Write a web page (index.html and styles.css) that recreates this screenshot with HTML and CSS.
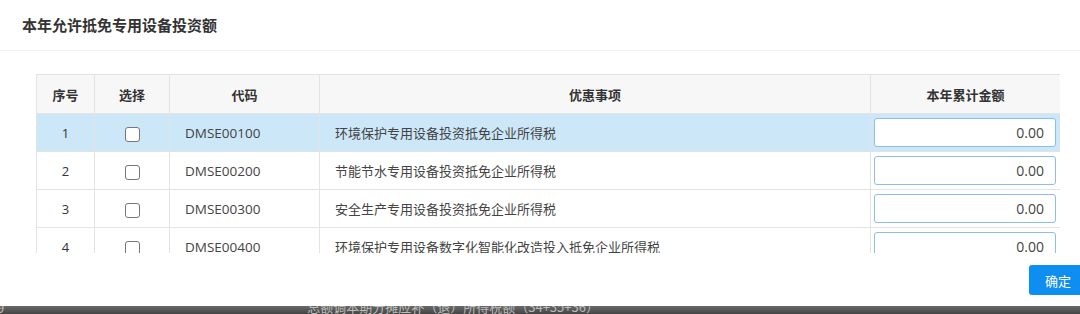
FILE: index.html
```html
<!DOCTYPE html>
<html lang="zh">
<head>
<meta charset="utf-8">
<link rel="stylesheet" href="styles.css">
</head>
<body>
<div class="page">
  <div class="modal">
    <div class="modal-header">
      <span class="title">本年允许抵免专用设备投资额</span>
      <span class="close">×</span>
    </div>
    <div class="modal-body">
      <div class="scroll">
        <table class="grid">
          <colgroup>
            <col class="c1"><col class="c2"><col class="c3"><col class="c4"><col class="c5">
          </colgroup>
          <thead>
            <tr><th>序号</th><th>选择</th><th>代码</th><th>优惠事项</th><th>本年累计金额</th></tr>
          </thead>
          <tbody>
            <tr class="active"><td class="num">1</td><td class="chk"><span class="box"></span></td><td class="code">DMSE00100</td><td class="item">环境保护专用设备投资抵免企业所得税</td><td class="amt"><div class="input">0.00</div></td></tr>
            <tr><td class="num">2</td><td class="chk"><span class="box"></span></td><td class="code">DMSE00200</td><td class="item">节能节水专用设备投资抵免企业所得税</td><td class="amt"><div class="input">0.00</div></td></tr>
            <tr><td class="num">3</td><td class="chk"><span class="box"></span></td><td class="code">DMSE00300</td><td class="item">安全生产专用设备投资抵免企业所得税</td><td class="amt"><div class="input">0.00</div></td></tr>
            <tr><td class="num">4</td><td class="chk"><span class="box"></span></td><td class="code">DMSE00400</td><td class="item">环境保护专用设备数字化智能化改造投入抵免企业所得税</td><td class="amt"><div class="input">0.00</div></td></tr>
          </tbody>
        </table>
      </div>
    </div>
    <div class="modal-footer">
      <button class="ok">确定</button>
    </div>
  </div>
  <div class="backdrop">
    <span class="bd-a">9</span>
    <span class="bd-c">总额调本期分摊应补（退）所得税额（34+35+36）</span>
  </div>
</div>
</body>
</html>
```
FILE: styles.css
```css
* { box-sizing: border-box; }
html, body { margin: 0; padding: 0; }
body {
  width: 1080px;
  height: 314px;
  overflow: hidden;
  font-family: "Open Sans", "Noto Sans CJK SC", sans-serif;
  color: #333;
  background: #fff;
}
.page { width: 1080px; height: 314px; display: flex; flex-direction: column; }
.modal {
  height: 306px;
  background: #fff;
  display: flex;
  flex-direction: column;
  overflow: hidden;
}
.modal-header {
  height: 51px;
  border-bottom: 1px solid #f0f0f0;
  display: flex;
  align-items: center;
  justify-content: space-between;
  padding-left: 22px;
  position: relative;
}
.title {
  font-size: 15px;
  font-weight: bold;
  color: #333;
  font-family: "Noto Sans CJK SC", sans-serif;
  margin-top: -2px;
}
.close {
  position: absolute;
  right: -14px;
  top: 6px;
  font-size: 20px;
  color: #aaa;
  font-family: "DejaVu Sans", sans-serif;
}
.modal-body {
  padding: 23px 20px 0 36px;
}
.scroll {
  height: 179px;
  overflow: hidden;
}
.grid {
  border-collapse: collapse;
  table-layout: fixed;
  width: 1024px;
  font-size: 13px;
}
.c1 { width: 58px; }
.c2 { width: 75px; }
.c3 { width: 150px; }
.c4 { width: 551px; }
.c5 { width: 190px; }
.grid th, .grid td {
  border: 1px solid #e3e3e3;
  padding: 0;
  white-space: nowrap;
}
.grid th {
  height: 39px;
  background: #f7f7f7;
  font-weight: bold;
  font-family: "Noto Sans CJK SC", sans-serif;
  font-size: 13px;
  text-align: center;
  color: #333;
}
.grid td { height: 38px; }
.grid tr.active td { background: #cce7f8; }
.num { text-align: center; }
.chk { text-align: center; }
.box {
  display: inline-block;
  width: 15px;
  height: 15px;
  border: 1px solid #767676;
  border-radius: 3px;
  background: #fff;
  vertical-align: middle;
  margin-top: 1px;
}
.code { padding-left: 15px !important; font-size: 13.5px; color: #444; }
.item { padding-left: 15px !important; font-family: "Noto Sans CJK SC", sans-serif; font-size: 13px; color: #444; }
.amt { padding: 0 4px 0 3px !important; }
.input {
  height: 29px;
  border: 1px solid #8dbcf0;
  border-radius: 3px;
  background: #fff;
  text-align: right;
  padding-right: 11px;
  line-height: 27px;
  font-size: 14px;
  color: #444;
}
.modal-footer {
  flex: 1;
  display: flex;
  justify-content: flex-end;
  align-items: flex-start;
  padding-top: 12px;
}
.ok {
  width: 60px;
  height: 30px;
  margin-right: -9px;
  border: none;
  border-radius: 3px;
  background: #0e8ef0;
  color: #fff;
  font-size: 13px;
  font-family: "Noto Sans CJK SC", sans-serif;
  text-align: left;
  padding: 0 0 0 16px;
}
.backdrop {
  flex: 1;
  background: linear-gradient(#6a6a6a, #444);
  display: flex;
  align-items: flex-start;
  overflow: hidden;
  font-size: 13px;
  color: #bbb;
  font-family: "Noto Sans CJK SC", sans-serif;
}
.bd-a { margin-top: -8px; margin-left: -3px; }
.bd-c { margin-top: -9px; margin-left: 303px; }
```
